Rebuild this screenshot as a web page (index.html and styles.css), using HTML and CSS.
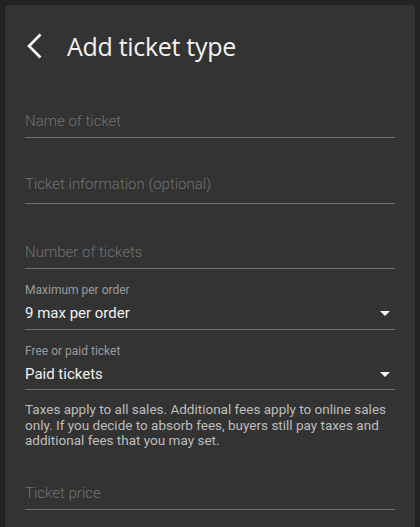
FILE: index.html
```html
<!DOCTYPE html>
<html>
<head>
<meta charset="utf-8">
<link rel="stylesheet" href="styles.css">
</head>
<body>
<div class="card">
  <div class="header">
    <svg class="back" width="16" height="26" viewBox="0 0 16 26"><polyline points="14.5,1.5 3,13 14.5,24.5" fill="none" stroke="#fff" stroke-width="2.6"/></svg>
    <div class="title">Add ticket type</div>
  </div>
  <div class="field f1"><span class="placeholder">Name of ticket</span></div>
  <div class="field f2"><span class="placeholder">Ticket information (optional)</span></div>
  <div class="field f3"><span class="placeholder">Number of tickets</span></div>
  <div class="select s1">
    <div class="label">Maximum per order</div>
    <div class="value"><span>9 max per order</span><span class="arrow"></span></div>
  </div>
  <div class="select s2">
    <div class="label">Free or paid ticket</div>
    <div class="value"><span>Paid tickets</span><span class="arrow"></span></div>
  </div>
  <p class="note">Taxes apply to all sales. Additional fees apply to online sales only. If you decide to absorb fees, buyers still pay taxes and additional fees that you may set.</p>
  <div class="field f4"><span class="placeholder">Ticket price</span></div>
</div>
</body>
</html>
```
FILE: styles.css
```css
html, body {
  margin: 0;
  padding: 0;
  background: #232323;
  height: 100%;
  overflow: hidden;
}
body {
  padding: 5px 5px 0 5px;
  box-sizing: border-box;
  font-family: Roboto, "Liberation Sans", sans-serif;
}
.card {
  background: #333333;
  border-radius: 4px 4px 0 0;
  padding: 25px 20px 0 20px;
  height: 100%;
  box-sizing: border-box;
}
.header {
  display: flex;
  align-items: center;
  height: 32px;
}
.back {
  margin-left: 1px;
  margin-right: 25px;
  display: block;
}
.title {
  font-family: "Open Sans", sans-serif;
  font-weight: 400;
  font-size: 25px;
  line-height: 32px;
  color: #f2f2f2;
  letter-spacing: -0.3px;
}
.field {
  border-bottom: 1px solid #6f6f6f;
  line-height: 20px;
  font-size: 15px;
  padding-bottom: 6px;
}
.placeholder {
  color: #727272;
  font-weight: 300;
}
.f1 { margin-top: 49px; }
.f2 { margin-top: 36px; padding-bottom: 9px; }
.f3 { margin-top: 38px; }
.f4 { margin-top: 34px; }
.select {
  margin-top: 13px;
  border-bottom: 1px solid #6f6f6f;
  padding-bottom: 6px;
}
.s2 { padding-bottom: 5px; }
.label {
  font-size: 12px;
  line-height: 16px;
  color: #9a9a9a;
  margin-bottom: 5px;
}
.value {
  display: flex;
  justify-content: space-between;
  align-items: center;
  font-size: 15px;
  line-height: 20px;
  color: #f0f0f0;
}
.arrow {
  width: 0;
  height: 0;
  border-left: 5px solid transparent;
  border-right: 5px solid transparent;
  border-top: 5px solid #f5f5f5;
  margin-right: 5px;
}
.note {
  margin: 12px 0 0 0;
  font-size: 13.5px;
  line-height: 15.5px;
  color: #bdbdbd;
}
```
